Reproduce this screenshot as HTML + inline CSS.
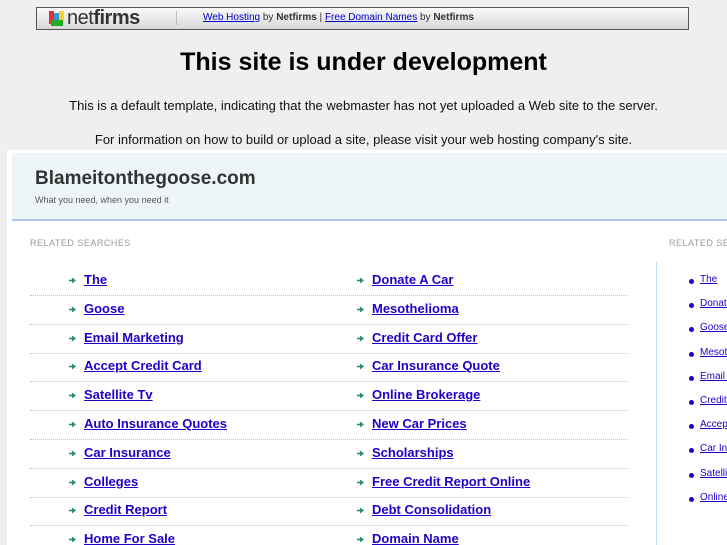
<!DOCTYPE html>
<html><head><style>
body{margin:0;width:727px;height:545px;overflow:hidden;background:#efefef;font-family:"Liberation Sans",sans-serif;position:relative}
.bar{position:absolute;left:36px;top:7px;width:653px;height:23px;border:1px solid #555;background:linear-gradient(#fafafa,#d8d8d8);box-sizing:border-box;overflow:hidden}
.logo{position:absolute;left:30px;top:0px;font-size:20px;color:#333;letter-spacing:-0.5px;line-height:20px}
.ic{position:absolute;top:3px;width:5px;height:13px}
.sep{position:absolute;left:139px;top:3px;height:14px;border-left:1px solid #bbb}
.bt{position:absolute;left:166px;top:4px;font-size:10px;color:#333}
.bt a{color:#00c;text-decoration:underline}
h1{position:absolute;left:0;width:727px;top:48px;margin:0;text-align:center;font-size:25px;color:#000}
.p{position:absolute;left:0;width:727px;text-align:center;font-size:13px;color:#111}
.frame{position:absolute;left:7px;top:150px;width:720px;height:395px;background:#fff;overflow:hidden}
.hd{position:absolute;left:5px;top:3px;width:715px;height:66px;background:#eef5f8;border-bottom:2px solid #a8c6ea}
.hd .t{position:absolute;left:23px;top:15px;font-size:19px;font-weight:bold;color:#333}
.hd .s{position:absolute;left:23px;top:42px;font-size:9px;color:#555}
.rs{position:absolute;font-size:9px;color:#999;letter-spacing:.5px;white-space:nowrap}
.it{position:absolute;font-size:13px;font-weight:bold;color:#2200c8;text-decoration:underline}
.ar{position:absolute;width:7px;height:7px;line-height:0}
.ar svg{display:block;width:7px;height:7px}
.dl{position:absolute;width:598px;border-top:1px dotted #b8c8dc}
.vl{position:absolute;left:649px;top:112px;height:290px;border-left:1px solid #c8dcf0}
.ri{position:absolute;font-size:10px;color:#2200c8;text-decoration:underline;white-space:nowrap}
.bu{position:absolute;width:5px;height:5px;border-radius:50%;background:#2200c8}
#L{position:absolute;left:0;top:0;width:727px;height:545px;overflow:hidden}
</style></head><body>
<div class="bar">
<div class="ic" style="left:12px;background:#d33"></div><div class="ic" style="left:17px;background:#39c;top:5px"></div><div class="ic" style="left:22px;background:#fc3"></div><div class="ic" style="left:14px;background:#2a2;top:12px;width:12px;height:6px"></div>
<div class="logo">net<b>firms</b></div><div class="sep"></div>
<div class="bt"><a>Web Hosting</a> by <b>Netfirms</b> | <a>Free Domain Names</a> by <b>Netfirms</b></div></div>
<h1>This site is under development</h1>
<div class="p" style="top:98px">This is a default template, indicating that the webmaster has not yet uploaded a Web site to the server.</div>
<div class="p" style="top:132px">For information on how to build or upload a site, please visit your web hosting company's site.</div>
<div class="frame">
<div class="hd"><div class="t">Blameitonthegoose.com</div><div class="s">What you need, when you need it</div></div>
<div class="rs" style="left:23px;top:88px">RELATED SEARCHES</div>
<div class="rs" style="left:662px;top:88px">RELATED SEARCHES</div>
<div class="vl"></div>
</div>
<div id="L"></div>
<script>
var a=["The","Goose","Email Marketing","Accept Credit Card","Satellite Tv","Auto Insurance Quotes","Car Insurance","Colleges","Credit Report","Home For Sale"];
var b=["Donate A Car","Mesothelioma","Credit Card Offer","Car Insurance Quote","Online Brokerage","New Car Prices","Scholarships","Free Credit Report Online","Debt Consolidation","Domain Name"];
var r=["The","Donate A Car","Goose","Mesothelioma","Email Marketing","Credit Card Offer","Accept Credit Card","Car Insurance Quote","Satellite Tv","Online Brokerage"];
var arr='<svg viewBox="0 0 7 7"><path d="M0 3.5H4" stroke="#2a8a7a" stroke-width="1.6"/><path d="M3 0.5L7 3.5L3 6.5Z" fill="#2a8a7a"/></svg>';
var h="";
for(var i=0;i<10;i++){var y=272+i*28.8;
h+='<div class="ar" style="left:69px;top:'+(y+5)+'px">'+arr+'</div><div class="it" style="left:84px;top:'+y+'px">'+a[i]+'</div>';
h+='<div class="ar" style="left:357px;top:'+(y+5)+'px">'+arr+'</div><div class="it" style="left:372px;top:'+y+'px">'+b[i]+'</div>';
if(i<9)h+='<div class="dl" style="left:30px;top:'+(y+23)+'px"></div>';
var ry=274+i*24.2;h+='<div class="bu" style="left:689px;top:'+(ry+5)+'px"></div><div class="ri" style="left:700px;top:'+ry+'px">'+r[i]+'</div>';}
document.getElementById("L").innerHTML=h;
</script>
</body></html>
